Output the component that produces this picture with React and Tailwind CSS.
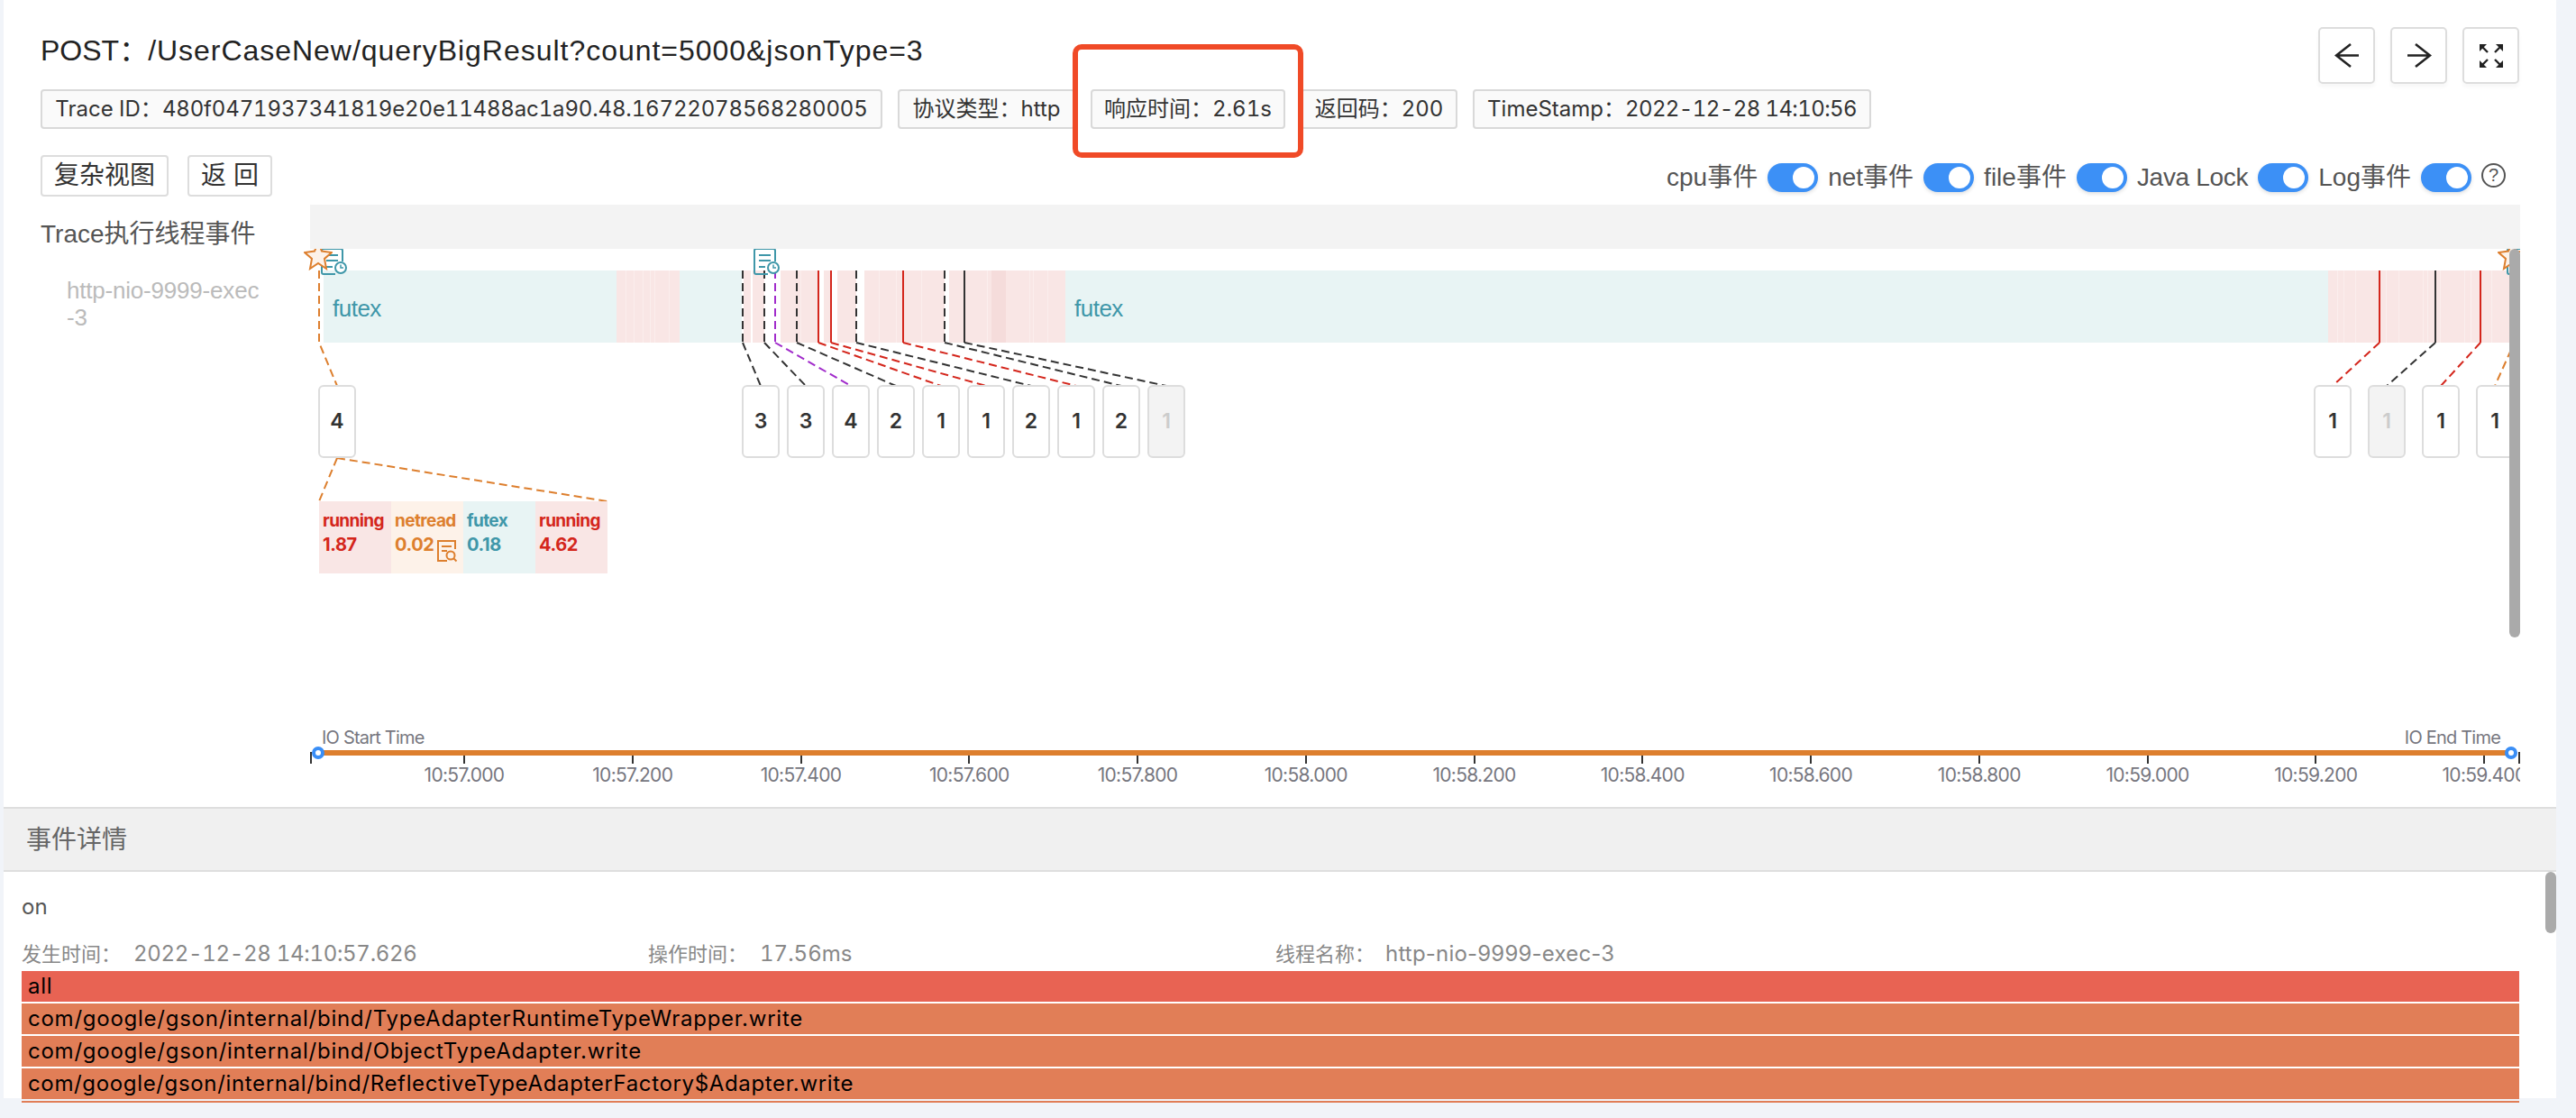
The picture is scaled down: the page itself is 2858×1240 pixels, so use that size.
import React from "react";

const CJK = "font-['Liberation_Sans','Noto_Sans_CJK_SC',sans-serif]";
const INTER = "font-['Inter','Noto_Sans_CJK_SC',sans-serif]";

const TAGS = [
  { k: "Trace ID：", v: "480f0471937341819e20e11488ac1a90.48.16722078568280005", w: "w-[934px]", t: "tracking-[-0.15px]" },
  { k: "协议类型：", v: "http", w: "w-[197px]", t: "" },
  { k: "响应时间：", v: "2.61s", w: "w-[216px]", t: "" },
  { k: "返回码：", v: "200", w: "w-[174px]", t: "" },
  { k: "TimeStamp：", v: "2022-12-28 14:10:56", w: "w-[442px]", t: "tracking-[-0.6px]" },
];

const TOGGLES = ["cpu事件", "net事件", "file事件", "Java Lock", "Log事件"];

// All canvas coordinates are page coordinates; OX/OY convert to the canvas.
const OX = 344;
const OY = 276;

const TEAL = [[359, 684], [754, 823], [1182, 2583]];
const PINK = [
  [684, 754], [825, 833], [835, 848], [866, 908], [914, 922], [929, 950], [959, 1048], [1053, 1182], [2583, 2784],
];
const SEPS = [694, 703, 713, 721, 726, 742, 888, 975, 994, 1022, 1095, 1142, 1146, 1162, 2593, 2600, 2613, 2647, 2661, 2688, 2693, 2707, 2734, 2741, 2764];

const BLACK = "#333333";
const RED = "#d4261c";
const PURPLE = "#a12ccb";
const ORANGE = "#dd7f2e";

const LINKS = [
  { x: 824, to: 844, c: BLACK, dash: true },
  { x: 848, to: 894, c: BLACK, dash: true },
  { x: 860, to: 944, c: PURPLE, dash: true },
  { x: 884, to: 994, c: BLACK, dash: true },
  { x: 908, to: 1044, c: RED, dash: false },
  { x: 922, to: 1094, c: RED, dash: false },
  { x: 950, to: 1144, c: BLACK, dash: true },
  { x: 1002, to: 1194, c: RED, dash: false },
  { x: 1048, to: 1244, c: BLACK, dash: true },
  { x: 1070, to: 1294, c: BLACK, dash: false },
  { x: 2640, to: 2588, c: RED, dash: false },
  { x: 2702, to: 2648, c: BLACK, dash: false },
  { x: 2752, to: 2708, c: RED, dash: false },
];

const BOXES = [
  { x: 353, n: 4 }, { x: 823, n: 3 }, { x: 873, n: 3 }, { x: 923, n: 4 }, { x: 973, n: 2 }, { x: 1023, n: 1 },
  { x: 1073, n: 1 }, { x: 1123, n: 2 }, { x: 1173, n: 1 }, { x: 1223, n: 2 }, { x: 1273, n: 1, off: true },
  { x: 2567, n: 1 }, { x: 2627, n: 1, off: true }, { x: 2687, n: 1 }, { x: 2747, n: 1 },
];

const DETAILS = [
  { t: "running", v: "1.87", bg: "bg-[#f9e6e5]", fg: "text-[#d4261c]" },
  { t: "netread", v: "0.02", bg: "bg-[#fdf2e9]", fg: "text-[#dd7f2e]", icon: true },
  { t: "futex", v: "0.18", bg: "bg-[#e8f4f4]", fg: "text-[#3f97a9]" },
  { t: "running", v: "4.62", bg: "bg-[#f9e6e5]", fg: "text-[#d4261c]" },
];

const AXIS = ["10:57.000", "10:57.200", "10:57.400", "10:57.600", "10:57.800", "10:58.000", "10:58.200", "10:58.400", "10:58.600", "10:58.800", "10:59.000", "10:59.200", "10:59.400"];

const ROWS = [
  "all",
  "com/google/gson/internal/bind/TypeAdapterRuntimeTypeWrapper.write",
  "com/google/gson/internal/bind/ObjectTypeAdapter.write",
  "com/google/gson/internal/bind/ReflectiveTypeAdapterFactory$Adapter.write",
];

function Toggle() {
  return (
    <div className="w-[56px] h-[32px] rounded-full bg-[#3c90f6] flex items-center justify-end pr-[4px] shadow-[0_2px_4px_rgba(0,0,0,0.12)]">
      <div className="w-[24px] h-[24px] rounded-full bg-white" />
    </div>
  );
}

function IconButton({ children }) {
  return (
    <div className="w-[63px] h-[63px] rounded-[5px] border-2 border-[#dddddd] bg-white flex items-center justify-center shadow-[0_4px_4px_rgba(0,0,0,0.03)]">
      {children}
    </div>
  );
}

function DocClock({ x, y }) {
  return (
    <svg className="absolute" style={{ left: x - OX, top: y - OY }} width="30" height="31" viewBox="0 0 30 31" fill="none" stroke="#3f97a9" strokeWidth="2">
      <path d="M24 15V3a2 2 0 0 0-2-2H3a2 2 0 0 0-2 2v24a2 2 0 0 0 2 2h13" />
      <path d="M6 8h13M6 14h13M6 21h7" />
      <circle cx="22" cy="22" r="6" fill="#ffffff" />
      <path d="M22 18.5V22h3" strokeWidth="1.5" />
    </svg>
  );
}

function Star({ x, y }) {
  return (
    <svg className="absolute" style={{ left: x - OX, top: y - OY }} width="32" height="24" viewBox="0 0 32 24" fill="#fdf2e9" stroke="#dd7f2e" strokeWidth="2">
      <path d="M16 -7L20 2.5L31 4L23 11L25 22L16 16L7 22L9 11L1 4L12 2.5Z" />
    </svg>
  );
}

function Canvas() {
  return (
    <div className="relative w-[2452px] h-[524px] [clip-path:inset(0_0_0_-20px)]">
      {/* thread bar */}
      {TEAL.map(([a, b]) => (
        <div key={a} className="absolute top-[24px] h-[80px] bg-[#e8f4f4]" style={{ left: a - OX, width: b - a }} />
      ))}
      {PINK.map(([a, b]) => (
        <div key={a} className="absolute top-[24px] h-[80px] bg-[#f9e6e5]" style={{ left: a - OX, width: b - a }} />
      ))}
      <div className="absolute top-[24px] h-[80px] left-[756px] w-[16px] bg-[#f5dcdb]" />
      {SEPS.map((x) => (
        <div key={x} className="absolute top-[24px] h-[80px] w-px bg-[#fbeeed]" style={{ left: x - OX }} />
      ))}
      <span className={`absolute left-[25px] top-[50px] text-[26px] leading-[32px] tracking-[-0.5px] text-[#3f97a9] ${CJK}`}>futex</span>
      <span className={`absolute left-[848px] top-[50px] text-[26px] leading-[32px] tracking-[-0.5px] text-[#3f97a9] ${CJK}`}>futex</span>

      {/* connectors */}
      <svg className="absolute left-0 top-0" width="2452" height="524" viewBox="344 276 2452 524" fill="none" strokeWidth="2">
        {LINKS.map((l) => (
          <g key={l.x} stroke={l.c}>
            <path d={`M${l.x} 300V380`} strokeDasharray={l.dash ? "9 5" : undefined} />
            <path d={`M${l.x} 380L${l.to} 428`} strokeDasharray="9 5" />
          </g>
        ))}
        <g stroke={ORANGE} strokeDasharray="9 5">
          <path d="M354 300V380L374 428" />
          <path d="M374 508L354 556" />
          <path d="M374 508L674 556" />
          <path d="M2786 388L2768 428" />
        </g>
      </svg>

      <DocClock x={356} y={275} />
      <DocClock x={836} y={275} />
      <DocClock x={2781} y={275} />
      <Star x={337} y={276} />
      <Star x={2771} y={276} />

      {/* count boxes */}
      {BOXES.map((b) => (
        <div
          key={b.x}
          className={`absolute top-[151px] w-[42px] h-[81px] rounded-[6px] border-2 border-[#dddddd] flex items-center justify-center text-[23px] font-semibold font-['Inter',sans-serif] ${b.off ? "bg-[#f3f3f3] text-[#cccccc]" : "bg-white text-[#333333]"}`}
          style={{ left: b.x - OX }}
        >
          {b.n}
        </div>
      ))}

      {/* expanded detail */}
      <div className="absolute left-[10px] top-[280px] flex h-[80px]">
        {DETAILS.map((d, i) => (
          <div key={i} className={`relative w-[80px] h-[80px] pl-[4px] pt-[9px] font-['Inter',sans-serif] font-bold leading-[26px] ${d.bg} ${d.fg}`}>
            <div className="text-[19px] tracking-[-0.6px]">{d.t}</div>
            <div className="text-[20px] tracking-[-0.4px]">{d.v}</div>
            {d.icon && (
              <svg className="absolute left-[50px] top-[42px]" width="24" height="26" viewBox="0 0 24 26" fill="none" stroke="#dd7f2e" strokeWidth="2">
                <path d="M21 11V2H2v22h10" />
                <path d="M6 8h11M6 13h6" />
                <circle cx="16" cy="18" r="4.5" />
                <path d="M19.5 21.5l3 3" />
              </svg>
            )}
          </div>
        ))}
      </div>

      {/* scrollbar */}
      <div className="absolute right-0 top-0 w-[12px] h-[431px] rounded-full bg-[#aaaaaa]" />
    </div>
  );
}

function Axis() {
  return (
    <div className="relative w-[2452px] h-[95px] overflow-hidden font-['Inter',sans-serif]">
      <span className="absolute left-[13px] top-[8px] text-[20px] leading-[20px] tracking-[-0.8px] text-[#77777f]">IO Start Time</span>
      <span className="absolute right-[22px] top-[8px] text-[20px] leading-[20px] tracking-[-0.8px] text-[#77777f]">IO End Time</span>
      <div className="absolute left-[13px] top-[32px] h-[6px] w-[2430px] bg-[#dd7f2e]" />
      <div className="absolute left-0 top-[34px] w-[2px] h-[13px] bg-[#333333]" />
      <div className="absolute right-0 top-[34px] w-[2px] h-[13px] bg-[#333333]" />
      <div className="absolute left-[2px] top-[28px] w-[14px] h-[14px] rounded-full bg-white border-[4px] border-[#3a8ef6]" />
      <div className="absolute left-[2435px] top-[28px] w-[14px] h-[14px] rounded-full bg-white border-[4px] border-[#3a8ef6]" />
      {AXIS.map((t, i) => {
        const x = 171 + i * 186.75;
        return (
          <div key={t}>
            <div className="absolute top-[38px] w-[2px] h-[9px] bg-[#333333]" style={{ left: x - 1 }} />
            <span className="absolute top-[48px] w-[120px] text-center text-[21px] leading-[24px] tracking-[-0.7px] text-[#77777f]" style={{ left: x - 60 }}>{t}</span>
          </div>
        );
      })}
    </div>
  );
}

export default function App() {
  return (
    <div className={`w-[2858px] h-[1240px] bg-[#f1f4f9] pl-[4px] overflow-hidden ${CJK}`}>
      <div className="relative w-[2832px] h-[1218px] bg-white flex flex-col">
        {/* header */}
        <div className="flex justify-between items-start pt-[30px] pl-[41px] pr-[41px]">
          <div>
            <h1 className="h-[52px] flex items-center text-[32px] font-normal text-[#222222] whitespace-nowrap">
              <span>POST：</span>
              <span className="tracking-[0.97px]">/UserCaseNew/queryBigResult?count=5000&amp;jsonType=3</span>
            </h1>
            <div className="mt-[17px] flex gap-[17px]">
              {TAGS.map((tag) => (
                <div key={tag.k} className={`h-[44px] flex items-center justify-center rounded-[4px] border-2 border-[#d9d9d9] bg-[#fafafa] text-[24px] text-[#333333] whitespace-nowrap tabular-nums ${INTER} ${tag.w}`}>
                  <span>{tag.k}</span>
                  <span className={tag.t}>{tag.v}</span>
                </div>
              ))}
            </div>
          </div>
          <div className="flex gap-[17px]">
            <IconButton>
              <svg width="28" height="29" viewBox="0 0 28 29" fill="none" stroke="#222222" strokeWidth="2.6"><path d="M27 14.5H2M18 2L2 14.5L18 27" /></svg>
            </IconButton>
            <IconButton>
              <svg width="28" height="29" viewBox="0 0 28 29" fill="none" stroke="#222222" strokeWidth="2.6"><path d="M1 14.5h25M10 2l16 12.5L10 27" /></svg>
            </IconButton>
            <IconButton>
              <svg width="26" height="26" viewBox="0 0 26 26" fill="#222222" stroke="#222222" strokeWidth="2.4">
                <path d="M3 3L9 9M23 3L17 9M3 23L9 17M23 23L17 17" />
                <path stroke="none" d="M0 0H8L0 8ZM26 0H18L26 8ZM0 26H8L0 18ZM26 26H18L26 18Z" />
              </svg>
            </IconButton>
          </div>
        </div>

        {/* toolbar */}
        <div className="mt-[29px] h-[46px] pl-[41px] pr-[40px] flex items-center justify-between">
          <div className="flex gap-[21px]">
            <div className="h-[46px] w-[142px] flex items-center justify-center rounded-[4px] border-2 border-[#dddddd] text-[28px] text-[#333333]">复杂视图</div>
            <div className="h-[46px] w-[94px] flex items-center justify-center rounded-[4px] border-2 border-[#dddddd] text-[28px] text-[#333333]">返 回</div>
          </div>
          <div className="flex items-center pt-[4px] text-[28px] text-[#555555]">
            {TOGGLES.map((t) => (
              <div key={t} className="flex items-center gap-[11px] mr-[11px] whitespace-nowrap">
                <span className={t === "Java Lock" ? "tracking-[-0.3px]" : ""}>{t}</span>
                <Toggle />
              </div>
            ))}
            <div className="-mt-[6px] w-[27px] h-[27px] rounded-full border-2 border-[#555555] flex items-center justify-center text-[20px] leading-none">?</div>
            <div className="w-[16px]" />
          </div>
        </div>

        {/* trace */}
        <div className="mt-[9px] h-[668px] pl-[41px] flex">
          <div className="w-[299px]">
            <div className="mt-[17px] text-[28px] leading-[32px] text-[#555555]">Trace执行线程事件</div>
            <div className="mt-[31px] ml-[29px] w-[220px] text-[26px] leading-[30px] tracking-[-0.2px] text-[#bbbbbb] break-all">http-nio-9999-exec-3</div>
          </div>
          <div className="w-[2452px]">
            <div className="h-[49px] bg-[#f3f3f3]" />
            <Canvas />
            <Axis />
          </div>
        </div>

        {/* details */}
        <div className="relative flex-1">
          <div className="h-[72px] bg-[#f0f0f0] border-y-2 border-[#dedede] pl-[25px] pt-[1px] flex items-center text-[28px] text-[#666666]">事件详情</div>
          <div className={`pl-[20px] pr-[41px] ${INTER}`}>
            <div className="mt-[23px] text-[24px] leading-[32px] text-[#555555]">on</div>
            <div className="mt-[21px] h-[30px] flex items-center text-[24px] text-[#888888] whitespace-nowrap">
              <div className="w-[695px] flex items-center"><span className="w-[124px] text-[22px]">发生时间：</span><span className="tabular-nums tracking-[-0.3px]">2022-12-28 14:10:57.626</span></div>
              <div className="w-[696px] flex items-center"><span className="w-[124px] text-[22px]">操作时间：</span><span className="tabular-nums">17.56ms</span></div>
              <div className="flex items-center"><span className="w-[122px] text-[22px]">线程名称：</span><span className="tracking-[0.2px]">http-nio-9999-exec-3</span></div>
            </div>
            <div className="mt-[4px] flex flex-col gap-[2px]">
              {ROWS.map((r, i) => (
                <div key={r} className={`h-[34px] pl-[7px] flex items-center text-[24px] text-black whitespace-nowrap ${i === 3 ? "tracking-[0.65px]" : "tracking-[0.75px]"} ${i === 0 ? "bg-[#e86353]" : "bg-[#e17e57]"}`}>{r}</div>
              ))}
              <div className="h-[2px] bg-[#e17e57]" />
            </div>
          </div>
          <div className="absolute right-0 top-[72px] w-[12px] h-[68px] rounded-full bg-[#aaaaaa]" />
        </div>

        {/* annotation */}
        <div className="absolute left-[1186px] top-[49px] w-[256px] h-[126px] rounded-[10px] border-[6px] border-[#f04a27]" />
      </div>
    </div>
  );
}
